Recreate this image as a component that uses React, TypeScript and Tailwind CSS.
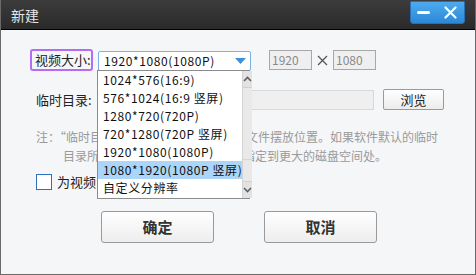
import React from "react";

const font = { fontFamily: '"Noto Sans CJK SC", "Noto Sans", sans-serif' };

const items = [
  "1024*576(16:9)",
  "576*1024(16:9 竖屏)",
  "1280*720(720P)",
  "720*1280(720P 竖屏)",
  "1920*1080(1080P)",
  "1080*1920(1080P 竖屏)",
  "自定义分辨率",
];

export default function App() {
  return (
    <div
      className="relative w-[476px] h-[275px] bg-[#f5f6f8] border-x border-b border-[#6a6a6a] flex flex-col overflow-hidden text-[12px] text-[#333]"
      style={font}
    >
      {/* Title bar */}
      <div className="h-[30px] shrink-0 bg-gradient-to-b from-[#3c3c3c] to-[#2a2a2a] border-b border-black flex items-start justify-between pl-[10px] pr-[10px]">
        <div className="text-[14px] text-[#e6e6e6] leading-[31px]">新建</div>
        <div className="mt-[1px] w-[55px] h-[23px] rounded-b-[3px] rounded-t-[1px] border border-[#2a6fb0] bg-gradient-to-b from-[#4eaaf0] to-[#2a88d6] flex items-center">
          <div className="ml-[6px] w-[13px] h-[3px] rounded-full bg-white" />
          <svg className="ml-[14px]" width="13" height="13" viewBox="0 0 13 13">
            <path d="M1.5 1.5 L11.5 11.5 M11.5 1.5 L1.5 11.5" stroke="white" strokeWidth="2.2" strokeLinecap="round" />
          </svg>
        </div>
      </div>

      {/* Body */}
      <div className="flex flex-col pl-[29px]">
        {/* Row 1 */}
        <div className="mt-[19px] flex items-center h-[22px]">
          <div className="w-[63px] h-[22px] border-2 border-[#b56cf2] rounded-[3px] flex items-center pl-[3px] text-[13px] text-[#222]">
            视频大小:
          </div>
          <div className="ml-[5px] w-[153px] h-[20px] mt-[2px] border border-[#7ab0e6] rounded-[2px] bg-white flex items-center justify-between pl-[5px] pr-[4px] text-[#111] tracking-[0.6px]">
            <span>1920*1080(1080P)</span>
            <svg width="11" height="7" viewBox="0 0 11 7">
              <path d="M0 0 H11 L5.5 6 Z" fill="#3d8fe0" />
            </svg>
          </div>
          <div className="ml-[18px] w-[43px] h-[20px] border border-[#a8a8a8] bg-[#efefef] text-[#8a8a8a] flex items-center pl-[2px]">1920</div>
          <div className="w-[21px] flex justify-center">
            <svg width="11" height="11" viewBox="0 0 11 11">
              <path d="M1 1 L10 10 M10 1 L1 10" stroke="#555" strokeWidth="1.3" />
            </svg>
          </div>
          <div className="w-[43px] h-[20px] border border-[#a8a8a8] bg-[#efefef] text-[#8a8a8a] flex items-center pl-[2px]">1080</div>
        </div>

        {/* Row 2 */}
        <div className="mt-[18px] flex items-center h-[21px]">
          <div className="w-[68px] pl-[6px] text-[13px] text-[#222]">临时目录:</div>
          <div className="w-[276px] h-[20px] border border-[#d8d8d8] bg-[#efefef]" />
          <div className="ml-[9px] w-[61px] h-[21px] border border-[#9a9a9a] rounded-[2px] bg-gradient-to-b from-white to-[#ececec] flex items-center justify-center text-[13px] text-[#222]">
            浏览
          </div>
        </div>

        {/* Note */}
        <div className="mt-[17px] pl-[6px] text-[#9a9a9a] text-[12px] leading-[19px]">
          <div>注：“临时目录”是指视频剪辑时的临时文件摆放位置。如果软件默认的临时</div>
          <div className="pl-[27px]">目录所在的磁盘空间不足，请将其指定到更大的磁盘空间处。</div>
        </div>

        {/* Checkbox */}
        <div className="mt-[9px] flex items-center h-[16px]">
          <div className="ml-[6px] w-[16px] h-[16px] border border-[#2f6fc0] bg-white" />
          <div className="ml-[5px] text-[13px] text-[#222]">为视频自动匹配最佳分辨率</div>
        </div>

        {/* Buttons */}
        <div className="mt-[21px] flex pl-[71px]">
          <div className="w-[113px] h-[32px] border border-[#9a9a9a] rounded-[3px] bg-gradient-to-b from-white to-[#ededed] flex items-center justify-center text-[15px] font-bold text-[#333]">
            确定
          </div>
          <div className="ml-[50px] w-[113px] h-[32px] border border-[#9a9a9a] rounded-[3px] bg-gradient-to-b from-white to-[#ededed] flex items-center justify-center text-[15px] font-bold text-[#333]">
            取消
          </div>
        </div>
      </div>

      {/* Dropdown list (overlay) */}
      <div className="absolute left-[96px] top-[70px] w-[153px] h-[129px] border border-[#8c8c8c] bg-white flex">
        <div className="flex-1 flex flex-col text-[#111] tracking-[0.6px]">
          {items.map((t, i) => (
            <div
              key={t}
              className={
                "h-[18px] flex items-center pl-[5px] whitespace-nowrap " +
                (i === 5 ? "bg-[#acd5fa]" : "")
              }
            >
              {t}
            </div>
          ))}
        </div>
        <div className="w-[17px] flex flex-col bg-[#e9e9e9] border-l border-[#d4d4d4]">
          <div className="h-[17px] flex items-center justify-center bg-[#e2e2e2] border-b border-[#d0d0d0]">
            <svg width="9" height="6" viewBox="0 0 9 6">
              <path d="M1 5 L4.5 1.5 L8 5" stroke="#606060" strokeWidth="1.6" fill="none" />
            </svg>
          </div>
          <div className="h-[72px] bg-[#e9e9e9] border-b border-[#d6d6d6]" />
          <div className="flex-1" />
          <div className="h-[17px] flex items-center justify-center bg-[#e2e2e2] border-t border-[#d0d0d0]">
            <svg width="9" height="6" viewBox="0 0 9 6">
              <path d="M1 1 L4.5 4.5 L8 1" stroke="#606060" strokeWidth="1.6" fill="none" />
            </svg>
          </div>
        </div>
      </div>
    </div>
  );
}
